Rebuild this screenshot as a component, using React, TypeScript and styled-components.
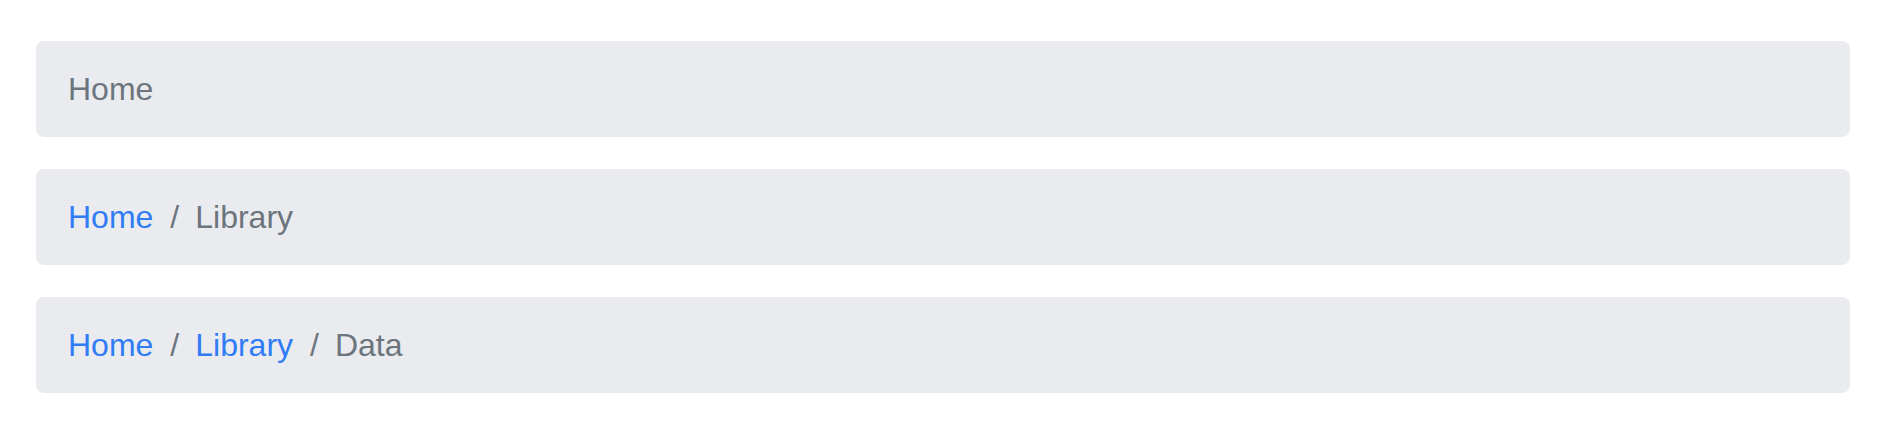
import styled, { createGlobalStyle } from "styled-components";

const GlobalStyle = createGlobalStyle`
  body {
    margin: 0;
    background: #ffffff;
    font-family: "Liberation Sans", Arial, sans-serif;
  }
`;

const Page = styled.div`
  padding: 41px 40px 0 36px;
`;

const Nav = styled.nav`
  margin-bottom: 32px;
`;

const Crumbs = styled.ol`
  display: flex;
  flex-wrap: wrap;
  list-style: none;
  margin: 0;
  padding: 24px 32px;
  background: #eaebef;
  border-radius: 8px;
  font-size: 32px;
  line-height: 48px;

  & > li + li::before {
    content: "/";
    display: inline-block;
    padding: 0 16px 0 17px;
    color: #6c757d;
  }
`;

const Crumb = styled.li<{ $active?: boolean }>`
  color: ${(p) => (p.$active ? "#6c757d" : "#307cf6")};
`;

const Link = styled.a`
  color: inherit;
  text-decoration: none;
`;

const trails = [["Home"], ["Home", "Library"], ["Home", "Library", "Data"]];

export default function App() {
  return (
    <Page>
      <GlobalStyle />
      {trails.map((trail, i) => (
        <Nav key={i} aria-label="breadcrumb">
          <Crumbs>
            {trail.map((label, j) => {
              const last = j === trail.length - 1;
              return (
                <Crumb key={label} $active={last}>
                  {last ? label : <Link href="#">{label}</Link>}
                </Crumb>
              );
            })}
          </Crumbs>
        </Nav>
      ))}
    </Page>
  );
}
